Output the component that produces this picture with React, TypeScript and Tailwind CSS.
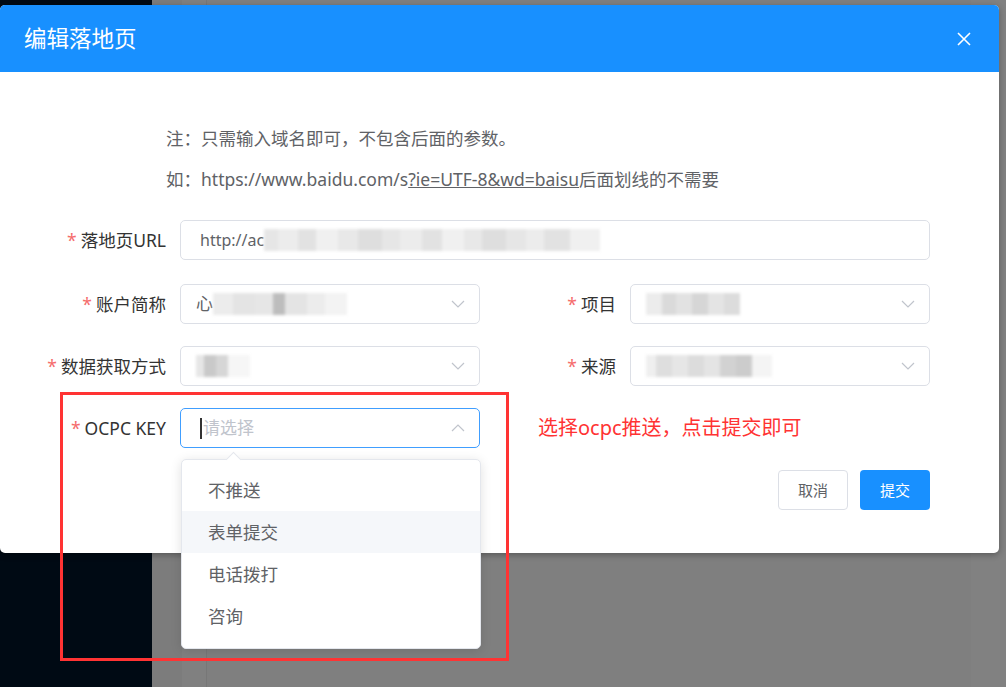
import React from 'react';

const font = { fontFamily: '"Noto Sans", "Noto Sans CJK SC", sans-serif' };

const ChevronDown = () => (
  <svg width="14" height="8" viewBox="0 0 14 8" fill="none" className="shrink-0">
    <path d="M1 1 L7 7 L13 1" stroke="#c0c4cc" strokeWidth="1.2" />
  </svg>
);

const ChevronUp = () => (
  <svg width="14" height="8" viewBox="0 0 14 8" fill="none" className="shrink-0">
    <path d="M1 7 L7 1 L13 7" stroke="#c0c4cc" strokeWidth="1.2" />
  </svg>
);

// mosaic used where the original value was blurred out
const Mosaic = ({ widths, shades }: { widths: number[]; shades: string[] }) => (
  <div className="flex h-[22px] items-stretch blur-[1.5px]">
    {widths.map((w, i) => (
      <div key={i} style={{ width: w, backgroundColor: shades[i % shades.length] }} />
    ))}
  </div>
);

const Label = ({ text, width }: { text: string; width: string }) => (
  <label className={`${width} shrink-0 pr-[14px] text-right text-[17.5px] text-[#333] leading-[40px]`}>
    <span className="text-[#f56c6c] mr-[4px]">*</span>
    {text}
  </label>
);

const SelectBox = ({ children }: { children: React.ReactNode }) => (
  <div className="flex h-[40px] w-[300px] items-center justify-between rounded-[5px] border border-[#dcdfe6] bg-white pl-[15px] pr-[14px]">
    <div className="flex items-center text-[17px] text-[#606266]">{children}</div>
    <ChevronDown />
  </div>
);

const options = ['不推送', '表单提交', '电话拨打', '咨询'];

export default function App() {
  return (
    <div className="relative h-[687px] w-full overflow-hidden bg-[#808080]" style={font}>
      {/* page behind the overlay */}
      <div className="flex h-full">
        <div className="w-[152px] shrink-0 bg-[#000a14]" />
        <div className="w-[30px] shrink-0 bg-[#7c7c7c]" />
        <div className="w-[25px] shrink-0 border-r border-[#777]" />
        <div className="flex-1 bg-[#7f7f7f]" />
        <div className="w-[35px] shrink-0 bg-[#818181]" />
      </div>

      {/* dialog */}
      <div className="absolute left-0 top-[5px] w-[999px] overflow-hidden rounded-[5px] bg-white shadow-[0_2px_6px_rgba(0,0,0,0.3)]">
        <div className="flex h-[67px] items-center justify-between bg-[#1890ff] pl-[24px] pr-[28px]">
          <h2 className="text-[22.5px] text-white">编辑落地页</h2>
          <svg width="14" height="14" viewBox="0 0 14 14">
            <path d="M1 1 L13 13 M13 1 L1 13" stroke="white" strokeWidth="1.6" />
          </svg>
        </div>

        <div className="pb-[43px] pt-[54px] pr-[69px]">
          <div className="pl-[166px] text-[17.5px] text-[#606266]">
            <p className="leading-[25px]">注：只需输入域名即可，不包含后面的参数。</p>
            <p className="mt-[16px] leading-[25px]">
              如：https://www.baidu.com/s<span className="underline">?ie=UTF-8&amp;wd=baisu</span>后面划线的不需要
            </p>
          </div>

          <div className="mt-[28px] flex">
            <Label text="落地页URL" width="w-[180px]" />
            <div className="flex h-[40px] flex-1 items-center rounded-[5px] border border-[#dcdfe6] pl-[19px] text-[16px] text-[#606266]">
              http://ac
              <Mosaic
                widths={[14, 20, 18, 22, 20, 24, 18, 22, 20, 22, 18, 24, 20, 18, 26, 30]}
                shades={['#e6e6e6', '#ececec', '#e2e2e2', '#f0f0f0', '#e8e8e8', '#dedede']}
              />
            </div>
          </div>

          <div className="mt-[24px] flex">
            <Label text="账户简称" width="w-[180px]" />
            <SelectBox>
              心
              <Mosaic widths={[20, 22, 18, 12, 22, 18, 22]} shades={['#ececec', '#e4e4e4', '#e6e6e6', '#bdbdbd', '#e4e4e4', '#ececec', '#f3f3f3']} />
            </SelectBox>
            <Label text="项目" width="w-[150px]" />
            <SelectBox>
              <Mosaic widths={[16, 14, 16, 16, 16, 16]} shades={['#ececec', '#dadada', '#e2e2e2', '#d6d6d6', '#e4e4e4', '#dcdcdc']} />
            </SelectBox>
          </div>

          <div className="mt-[22px] flex">
            <Label text="数据获取方式" width="w-[180px]" />
            <SelectBox>
              <Mosaic widths={[8, 12, 12, 22]} shades={['#e6e6e6', '#c9c9c9', '#d6d6d6', '#f6f6f6']} />
            </SelectBox>
            <Label text="来源" width="w-[150px]" />
            <SelectBox>
              <Mosaic widths={[10, 16, 16, 16, 16, 16, 16, 20]} shades={['#efefef', '#dedede', '#e6e6e6', '#dcdcdc', '#e4e4e4', '#d2d2d2', '#cccccc', '#f4f4f4']} />
            </SelectBox>
          </div>

          <div className="mt-[22px] flex items-center">
            <Label text="OCPC KEY" width="w-[180px]" />
            <div className="flex h-[40px] w-[300px] items-center justify-between rounded-[5px] border border-[#409eff] pl-[19px] pr-[14px]">
              <div className="flex items-center text-[17px] text-[#c0c4cc]">
                <span className="mr-[1px] h-[21px] w-[2px] bg-[#333]" />
                请选择
              </div>
              <ChevronUp />
            </div>
            <span className="ml-[58px] text-[20px] text-[#f33]">选择ocpc推送，点击提交即可</span>
          </div>

          <div className="mt-[22px] flex justify-end gap-[12px]">
            <button className="h-[40px] w-[70px] rounded-[4px] border border-[#dcdfe6] bg-white text-[15px] text-[#606266]">取消</button>
            <button className="h-[40px] w-[70px] rounded-[4px] bg-[#1890ff] text-[15px] text-white">提交</button>
          </div>
        </div>
      </div>

      {/* open select dropdown */}
      <div className="absolute left-[181px] top-[459px] w-[300px] rounded-[5px] border border-[#e4e7ed] bg-white pb-[11px] pt-[9px] shadow-[0_2px_12px_rgba(0,0,0,0.12)]">
        <div className="absolute left-[46px] top-[-6px] h-[11px] w-[11px] rotate-45 border-l border-t border-[#e4e7ed] bg-white" />
        {options.map((o, i) => (
          <div
            key={o}
            className={`flex h-[42px] items-center px-[26px] text-[17.5px] text-[#606266] ${i === 1 ? 'bg-[#f5f7fa]' : ''}`}
          >
            {o}
          </div>
        ))}
      </div>

      {/* annotation frame */}
      <div className="pointer-events-none absolute left-[60px] top-[392px] h-[269px] w-[449px] border-[3px] border-[#f33]" />
    </div>
  );
}
